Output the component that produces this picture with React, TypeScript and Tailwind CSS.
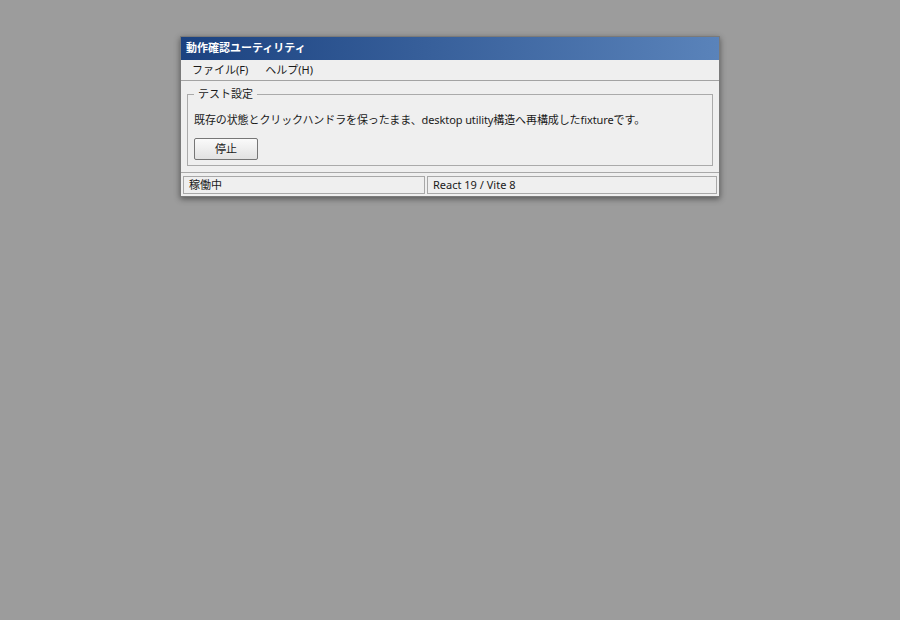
export default function App() {
  return (
    <div
      className="min-h-screen w-full bg-[#9c9c9c] flex justify-center items-start pt-[36px]"
      style={{ fontFamily: '"Noto Sans", "Noto Sans CJK JP", sans-serif' }}
    >
      <div className="w-[540px] bg-[#efefef] border border-[#7a7a7a] shadow-[0_2px_6px_rgba(0,0,0,0.45)] text-[11px] text-[#1a1a1a]">
        <div className="h-[23px] flex items-center px-[5px] bg-gradient-to-r from-[#1b4280] to-[#5a83ba] text-white font-bold">
          動作確認ユーティリティ
        </div>
        <div className="h-[21px] flex items-center px-[5px] border-b border-[#a3a3a3]">
          <span className="px-[6px]">ファイル(F)</span>
          <span className="px-[6px] ml-[5px]">ヘルプ(H)</span>
        </div>
        <div className="px-[6px] pt-[6px] pb-[6px]">
          <fieldset className="border border-[#aaaaaa] px-[6px] pb-[5px]">
            <legend className="px-[4px] leading-[14px]">テスト設定</legend>
            <p className="mt-[12px] leading-[14px] tracking-[-0.1px]">
              既存の状態とクリックハンドラを保ったまま、desktop utility構造へ再構成したfixtureです。
            </p>
            <button className="mt-[11px] w-[64px] h-[22px] border border-[#767676] rounded-[2px] bg-gradient-to-b from-[#fafafa] to-[#e2e2e2] text-[11px] text-[#1a1a1a]">
              停止
            </button>
          </fieldset>
        </div>
        <div className="border-t border-[#a8a8a8] px-[2px] pt-[3px] pb-[2px] flex gap-[2px]">
          <div className="w-[242px] h-[18px] border border-[#a8a8a8] flex items-center px-[5px]">稼働中</div>
          <div className="flex-1 h-[18px] border border-[#a8a8a8] flex items-center px-[5px]">React 19 / Vite 8</div>
        </div>
      </div>
    </div>
  );
}
